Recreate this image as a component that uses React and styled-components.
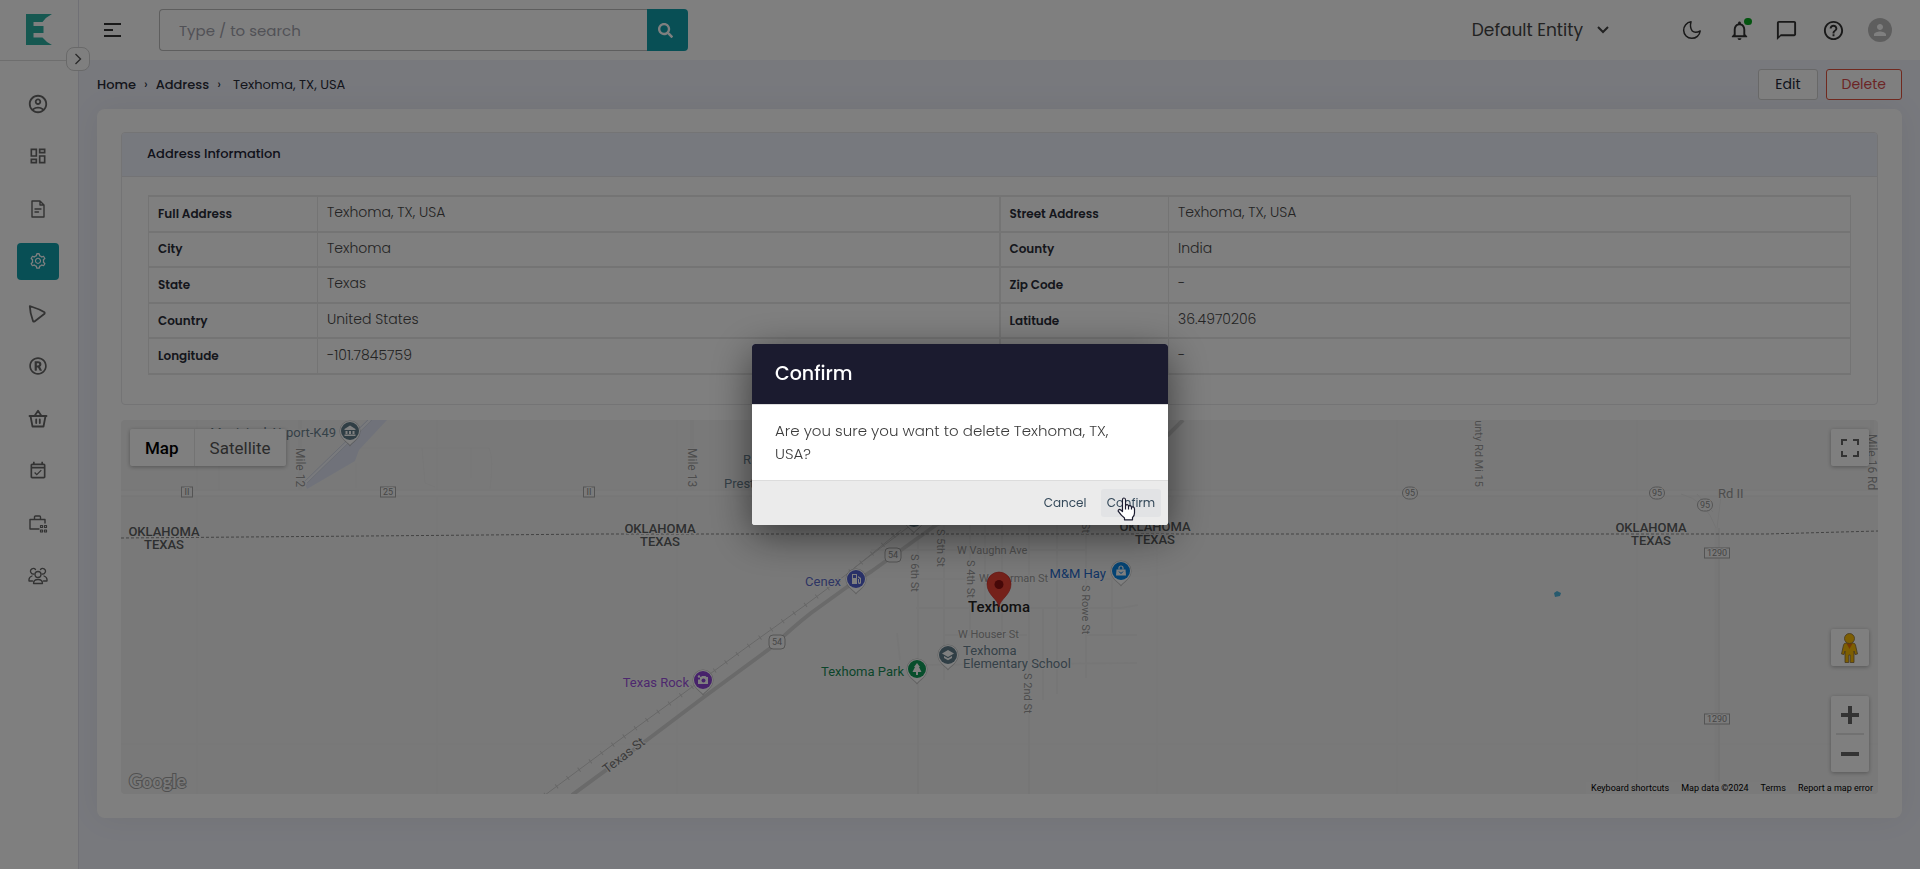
import React from "react";
import styled, { createGlobalStyle } from "styled-components";
import {
  MdOutlineAccountCircle,
  MdOutlineDashboard,
  MdOutlineEventAvailable,
  MdOutlineNotifications,
  MdOutlineChatBubbleOutline,
  MdHelpOutline,
  MdPerson,
} from "react-icons/md";
import { AiOutlineSetting } from "react-icons/ai";
import { FaRegRegistered, FaSearch } from "react-icons/fa";

const GlobalStyle = createGlobalStyle`
  *, *::before, *::after { box-sizing: border-box; }
  body {
    margin: 0;
    background: #f0f2fb;
    color: #333;
    font-family: Poppins, Inter, "Liberation Sans", sans-serif;
    font-size: 14px;
  }
  button, input { font: inherit; }
`;

/* ---------- shell ---------- */

const Shell = styled.div`
  display: grid;
  grid-template-columns: 79px 1fr;
  min-height: 100vh;
`;

const Sidebar = styled.aside`
  position: relative;
  background: #fff;
  border-right: 1px solid #e0e0ea;
`;

const Brand = styled.a`
  display: flex;
  align-items: center;
  justify-content: center;
  height: 61px;
  border-bottom: 1px solid #dcdcdc;
`;

const Expand = styled.button`
  position: absolute;
  top: 47px;
  right: -12px;
  z-index: 1;
  display: flex;
  align-items: center;
  justify-content: center;
  width: 24px;
  height: 24px;
  padding: 0;
  background: #fff;
  border: 1px solid #d2d2d2;
  border-radius: 8px;
`;

const Menu = styled.nav`
  display: flex;
  flex-direction: column;
  align-items: center;
  justify-content: space-between;
  height: 510px;
  margin-top: 24px;
  padding-right: 2px;
`;

const MenuItem = styled.a`
  display: flex;
  align-items: center;
  justify-content: center;
  width: 42px;
  height: 37px;
  border-radius: 4px;
  color: ${(p) => (p.$active ? "#fff" : "#666")};
  background: ${(p) => (p.$active ? "#109fab" : "transparent")};
`;

const Content = styled.div`
  display: flex;
  flex-direction: column;
  min-width: 0;
`;

/* ---------- top bar ---------- */

const TopBar = styled.header`
  display: flex;
  align-items: center;
  height: 60px;
  padding: 0 28px 0 22px;
  background: #fff;
`;

const BareButton = styled.button`
  position: relative;
  display: flex;
  align-items: center;
  justify-content: center;
  width: 24px;
  height: 24px;
  padding: 0;
  border: 0;
  background: none;
  color: #333;
`;

const Search = styled.form`
  display: flex;
  width: 529px;
  height: 42px;
  margin-left: 34px;
`;

const SearchInput = styled.input`
  flex: 1;
  min-width: 0;
  padding: 0 19px;
  border: 1px solid #bcbcbc;
  border-right: 0;
  border-radius: 4px 0 0 4px;
  font-size: 15px;
  outline: 0;
  &::placeholder { color: #a3a3ad; opacity: 1; }
`;

const SearchButton = styled.button`
  display: flex;
  align-items: center;
  justify-content: center;
  width: 41px;
  padding: 0 4px 0 0;
  border: 0;
  border-radius: 0 4px 4px 0;
  background: #109fab;
  color: #fff;
`;

const Entity = styled.button`
  display: flex;
  align-items: center;
  gap: 14px;
  margin-left: auto;
  padding: 0;
  border: 0;
  background: none;
  color: #444;
  font-size: 17px;
`;

const Tools = styled.div`
  display: flex;
  align-items: center;
  gap: 23px;
  margin-left: 71px;
`;

const Dot = styled.span`
  position: absolute;
  top: 0;
  right: -1px;
  width: 8px;
  height: 7px;
  border-radius: 4px;
  background: #06a81e;
`;

const Avatar = styled.button`
  display: flex;
  align-items: center;
  justify-content: center;
  width: 24px;
  height: 24px;
  padding: 0;
  border: 0;
  border-radius: 50%;
  background: #bdbdbd;
  color: #fff;
`;

/* ---------- page ---------- */

const Page = styled.main`
  padding: 0 18px 40px;
`;

const PageHead = styled.div`
  display: flex;
  align-items: center;
  justify-content: space-between;
  height: 49px;
`;

const Crumbs = styled.nav`
  display: flex;
  align-items: center;
  gap: 8px;
  font-size: 13px;
  color: #2a2d38;
`;

const CrumbLink = styled.a`
  color: inherit;
  font-weight: 500;
  text-decoration: none;
`;

const CrumbHere = styled.span`
  margin-left: 4px;
`;

const Actions = styled.div`
  display: flex;
  gap: 8px;
`;

const ActionButton = styled.button`
  height: 31px;
  padding: 0 ${(p) => (p.$danger ? 15 : 16)}px;
  border: 1px solid ${(p) => (p.$danger ? "#e0523f" : "#d0d0d0")};
  border-radius: 3px;
  background: #fff;
  color: ${(p) => (p.$danger ? "#d84a4a" : "#222838")};
  font-size: 14px;
`;

const Card = styled.div`
  display: flex;
  flex-direction: column;
  gap: 15px;
  padding: 23px 24px 24px;
  border-radius: 8px;
  background: #fff;
  box-shadow: 0 0 32px rgba(0, 0, 0, 0.06);
`;

const Panel = styled.section`
  border: 1px solid #e8e8ea;
  border-radius: 4px;
  overflow: hidden;
`;

const PanelTitle = styled.h2`
  display: flex;
  align-items: center;
  height: 44px;
  margin: 0;
  padding: 0 25px 2px;
  border-bottom: 1px solid #e6e6ea;
  background: #eff2fc;
  color: #222436;
  font-size: 13px;
  font-weight: 500;
`;

const PanelBody = styled.div`
  padding: 18px 26px 29px;
`;

const InfoTable = styled.table`
  width: 100%;
  height: 180px;
  table-layout: fixed;
  border-collapse: collapse;
  border: 1px solid #e6e6e6;
`;

const LabelCell = styled.th`
  width: 169px;
  padding: 0 9px;
  border: solid #e8e8e8;
  border-width: 2px 1px;
  border-left-width: ${(p) => (p.$inner ? 2 : 1)}px;
  color: #2a2d38;
  font-size: 12px;
  font-weight: 600;
  text-align: left;
`;

const ValueCell = styled.td`
  padding: 0 9px 2px;
  border: solid #e8e8e8;
  border-width: 2px 1px;
  color: #484848;
  font-size: 14px;
  font-weight: 300;
`;

const rows = [
  ["Full Address", "Texhoma, TX, USA", "Street Address", "Texhoma, TX, USA"],
  ["City", "Texhoma", "County", "India"],
  ["State", "Texas", "Zip Code", "-"],
  ["Country", "United States", "Latitude", "36.4970206"],
  ["Longitude", "-101.7845759", "Timezone", "-"],
];

/* ---------- map ---------- */

const MapFrame = styled.section`
  position: relative;
  height: 374px;
  overflow: hidden;
  border-radius: 4px;
  background: #f3f3f3;
  font-family: Roboto, sans-serif;
`;

const MapCanvas = styled.svg`
  display: block;
  width: 100%;
  height: 100%;
  text { paint-order: stroke; stroke: #f5f5f5; stroke-width: 2px; stroke-linejoin: round; }
`;

const MapTypes = styled.div`
  position: absolute;
  top: 9px;
  left: 9px;
  display: flex;
  border-radius: 2px;
  background: #fff;
  box-shadow: 0 1px 4px rgba(0, 0, 0, 0.3);
`;

const MapType = styled.button`
  height: 37px;
  padding: 0 15px;
  border: 0;
  border-left: ${(p) => (p.$active ? 0 : "1px solid #e6e6e6")};
  background: none;
  color: ${(p) => (p.$active ? "#000" : "#565656")};
  font-size: 17px;
  font-weight: ${(p) => (p.$active ? 500 : 400)};
`;

const MapTools = styled.div`
  position: absolute;
  top: 9px;
  right: 9px;
  bottom: 22px;
  display: flex;
  flex-direction: column;
  gap: 30px;
`;

const MapToolGroup = styled.div`
  display: flex;
  flex-direction: column;
  align-items: center;
  width: 38px;
  margin-bottom: ${(p) => (p.$push ? "auto" : 0)};
  border-radius: 2px;
  background: #fff;
  box-shadow: 0 1px 4px rgba(0, 0, 0, 0.3);
`;

const MapTool = styled.button`
  display: flex;
  align-items: center;
  justify-content: center;
  width: 38px;
  height: 37px;
  padding: 0;
  border: 0;
  background: none;
`;

const ToolRule = styled.span`
  width: 28px;
  height: 2px;
  background: #e2e2e2;
`;

const Credits = styled.div`
  position: absolute;
  right: 0;
  bottom: 0;
  display: flex;
  gap: 12px;
  padding: 0 5px;
  background: rgba(245, 245, 245, 0.7);
  color: #000;
  font-size: 9px;
  line-height: 12px;
  a { color: inherit; text-decoration: none; }
`;

const GoogleMark = styled.a`
  position: absolute;
  left: 8px;
  bottom: 1px;
  color: #f2f2f2;
  font-family: Lato, sans-serif;
  font-size: 18px;
  font-weight: 700;
  line-height: 24px;
  text-decoration: none;
  -webkit-text-stroke: 2px #a0a0a0;
  paint-order: stroke fill;
`;

const Road = ({ d, w = 1, c = "#eaeaea" }) => (
  <path d={d} fill="none" stroke={c} strokeWidth={w} strokeLinejoin="round" />
);

const Street = ({ x, y, turn = 0, size = 11, anchor = "start", children }) => (
  <text x={x} y={y} fontSize={size} fill="#9a9a9a" textAnchor={anchor} transform={turn ? `rotate(${turn} ${x} ${y})` : undefined}>
    {children}
  </text>
);

const Place = ({ x, y, fill, anchor = "start", children }) => (
  <text x={x} y={y} fontSize="13" fill={fill} textAnchor={anchor}>{children}</text>
);

const Border = ({ x, y }) => (
  <g fontSize="13" fontWeight="500" fill="#5c5f61" textAnchor="middle">
    <text x={x} y={y}>OKLAHOMA</text>
    <text x={x} y={y + 13}>TEXAS</text>
  </g>
);

const Shield = ({ x, y, w, r = 0, h = 10, children }) => (
  <g>
    <rect x={x - w / 2} y={y - h / 2} width={w} height={h} rx={r} fill="#f6f6f6" stroke="#a8a8a8" />
    <text x={x} y={y + 3} fontSize="9" fill="#8c8c8c" textAnchor="middle">{children}</text>
  </g>
);

const Pin = ({ x, y, fill, children }) => (
  <g transform={`translate(${x} ${y})`}>
    <path d="M0 15.500C-2.500 11.500-10.500 8-10.500 0A10.500 10.500 0 0 1 10.500 0C10.500 8 2.500 11.500 0 15.500Z" fill="#9c9c9c" opacity=".6" />
    <path d="M0 14C-2.500 10.500-10 7.500-10 0A10 10 0 0 1 10 0C10 7.500 2.500 10.500 0 14Z" fill="#fff" />
    <circle r="9" fill={fill} />
    <g fill="#fff" stroke="none">{children}</g>
  </g>
);

const bank = <path d="M-5.500-2 0-5.500 5.500-2V-1H-5.500ZM-4.500 0H-2.500V3H-4.500ZM-1 0H1V3H-1ZM2.500 0H4.500V3H2.500ZM-5.500 3.500H5.500V5H-5.500Z" />;

const ticks = "M424 375 490 326 556 278 619 232 683 186 726 154 780 110";

function MapView() {
  return (
    <MapFrame aria-label="Map">
      <MapCanvas viewBox="0 0 1757 374" preserveAspectRatio="xMidYMid slice" role="img" aria-label="Map of Texhoma">
        <Road d="M76 0V374M316 0V374M556 0V374M1036 110V374M1276 0V374M1516 0V374M0 324H1757M98 46V70" c="#efefef" />
        <Road d="M179 0V70M571 0V70M1358 0V72M1751 0V72" w={4} c="#efefef" />
        <Road d="M237 28H368Q373 38 369 69M301 28 304 63 314 67M350 28V58M235 43V68" c="#eeeeee" />
        <path d="M246 0H266L238 30 234 41 186 69 183 62Z" fill="#e0e5f4" />
        <Road d="M249 0 184 63" w={3} c="#f2f4fa" />
        <Road d="M251 0 186 63M247 0 182 63" c="#d4d9e6" />
        <Road d="M0 73H1560 1757" w={6} c="#f6f6f6" />
        <Road d="M0 70H1757M0 76H1757" c="#ececec" />
        <Road d="M1560 74Q1585 80 1595 108M1576 74 1592 92M1600 76 1596 108" c="#e8e8e8" />
        <Road d="M1596 108V374" w={5} c="#eeeeee" />
        <Road d="M1598 108V374" c="#e2e2e2" />
        <Road d="M797 120V374M823 105V260M849 105V215M864 105V190M881 105V212M908 105V374M922 187V280M936 105V274M965 105V258M991 160V213M750 130H965M796 159H1000M795 188H1000L1017 185M824 215H906M965 215H1016M795 245 1016 243M776 213 779 240" w={2} c="#ededed" />
        <Road d={ticks} c="#cfcfcf" />
        <path d={ticks} fill="none" stroke="#cfcfcf" strokeWidth="5" strokeDasharray="1 13" />
        <Road d="M733 148 790 105" c="#cfcfcf" />
        <Road d="M451 375 526 320 583 277 651 227Q672 207 690 193L726 167 751 151 815 105 1047 15 1062 0" w={4} c="#d4d4d4" />
        <path d="M0 118 246 116 479 114H1646L1757 111" fill="none" stroke="#868686" strokeDasharray="3 2" />
        <path d="M1433 173 1436 171 1440 173 1439 176 1434 177Z" fill="#4fb4dc" />

        <Shield x={66} y={72} w={11}>II</Shield>
        <Shield x={267} y={72} w={15}>25</Shield>
        <Shield x={468} y={72} w={11}>II</Shield>
        <Shield x={1289} y={73} w={15} h={12} r={6}>95</Shield>
        <Shield x={1536} y={73} w={15} h={12} r={6}>95</Shield>
        <Shield x={1584} y={85} w={15} h={12} r={6}>95</Shield>
        <Shield x={1596} y={133} w={25}>1290</Shield>
        <Shield x={1596} y={299} w={25}>1290</Shield>
        <Shield x={656} y={222} w={16} h={14} r={4}>54</Shield>
        <Shield x={772} y={135} w={16} h={14} r={4}>54</Shield>

        <Street x={175} y={28} turn={90} size={12}>Mile 12</Street>
        <Street x={567} y={28} turn={90} size={12}>Mile 13</Street>
        <Street x={1354} y={67} turn={90} anchor="end">unty Rd Mi 15</Street>
        <Street x={1747} y={14} turn={90} size={12}>Mile 16 Rd</Street>
        <Street x={1597} y={78} size={13}>Rd II</Street>
        <Street x={836} y={134}>W Vaughn Ave</Street>
        <Street x={858} y={162}>W Sherman St</Street>
        <Street x={837} y={218}>W Houser St</Street>
        <Street x={790} y={134} turn={90}>S 6th St</Street>
        <Street x={816} y={109} turn={90}>S 5th St</Street>
        <Street x={846} y={140} turn={90}>S 4th St</Street>
        <Street x={961} y={165} turn={90}>S Rowe St</Street>
        <Street x={903} y={253} turn={90}>S 2nd St</Street>
        <Street x={961} y={113} turn={90} anchor="end">Main St</Street>
        <g fill="#777" fontSize="13">
          <text x="486" y="354" transform="rotate(-38 486 354)">Texas St</text>
        </g>

        <Border x={43} y={116} />
        <Border x={539} y={113} />
        <Border x={1034} y={111} />
        <Border x={1530} y={112} />

        <Place x={215} y={17} fill="#6b8290" anchor="end">Municipal Airport-K49</Place>
        <Place x={622} y={44} fill="#6b8290">R</Place>
        <Place x={603} y={68} fill="#6b8290">Prest</Place>
        <Place x={720} y={166} fill="#5c6bc8" anchor="end">Cenex</Place>
        <Place x={568} y={267} fill="#9a50dc" anchor="end">Texas Rock</Place>
        <Place x={783} y={256} fill="#178a55" anchor="end">Texhoma Park</Place>
        <Place x={842} y={235} fill="#6b8290">Texhoma</Place>
        <Place x={842} y={248} fill="#6b8290">Elementary School</Place>
        <Place x={985} y={158} fill="#2468c8" anchor="end">M&amp;M Hay</Place>

        <Pin x={229} y={11} fill="#607d8b">{bank}</Pin>
        <Pin x={793} y={98} fill="#607d8b">{bank}</Pin>
        <Pin x={735} y={159} fill="#5363d0">
          <path d="M-4-5H1V5H-4ZM2-3 5-1V3.500A1.500 1.500 0 0 1 2 3.500V0H3V3.500H4V0L2-1.500Z" />
          <path d="M-3-4H0V-1H-3Z" fill="#5363d0" />
        </Pin>
        <Pin x={582} y={260} fill="#8e44d6">
          <path d="M-1.500-4H2.500L3.500-3H5V4H-5V-.500H-3V-3H-1.500Z" />
          <circle cy="0.500" cx="0.500" r="2" fill="#8e44d6" />
          <circle cx="-4" cy="-3.500" r="1.200" />
        </Pin>
        <Pin x={796} y={249} fill="#0f9d58">
          <path d="M0-6 3-2H2L4.500 3H1V6H-1V3H-4.500L-2-2H-3Z" />
        </Pin>
        <Pin x={827} y={235} fill="#607d8b">
          <path d="M-6-1.500 0-5 6-1.500 0 2ZM-4 1 0 3.300 4 1V3L0 5.300-4 3Z" />
        </Pin>
        <Pin x={1000} y={151} fill="#0a88e8">
          <path d="M-4.500-1.500H4.500L5 4.500H-5Z" />
          <path d="M-2-1.500V-3A2 2 0 0 1 2-3V-1.500" fill="none" stroke="#fff" strokeWidth="1.200" />
          <path d="M-2 .500Q0 4 2 .500" fill="none" stroke="#0a88e8" />
        </Pin>

        <text x="878" y="192" fontSize="15" fontWeight="500" fill="#222" textAnchor="middle">Texhoma</text>
        <path d="M878 187C877 179 866 175 866 164A12 12 0 0 1 890 164C890 175 879 179 878 187Z" fill="#ea4335" stroke="#c5221f" strokeWidth=".6" />
        <circle cx="878" cy="164.500" r="4.500" fill="#8c1010" />
      </MapCanvas>

      <MapTypes>
        <MapType $active type="button">Map</MapType>
        <MapType type="button">Satellite</MapType>
      </MapTypes>

      <MapTools>
        <MapToolGroup $push>
          <MapTool type="button" aria-label="Toggle fullscreen">
            <svg width="18" height="18" fill="none" stroke="#666" strokeWidth="2"><path d="M1 6V1H6M12 1H17V6M17 12V17H12M6 17H1V12" /></svg>
          </MapTool>
        </MapToolGroup>
        <MapToolGroup>
          <MapTool type="button" aria-label="Street View">
            <svg width="18" height="30" stroke="#8a7040" strokeWidth=".8" fill="#fbbc04">
              <path d="M5 10H12Q14 10 14.500 12L16.500 21 14 21.500 13 18V29.500H9.200V22H7.800V29.500H4V18L3 21.500.500 21 2.500 12Q3 10 5 10Z" />
              <path d="M5.500 10.500H11.500L8.500 16Z" fill="#e8710a" stroke="none" />
              <circle cx="8.500" cy="5.500" r="5" />
            </svg>
          </MapTool>
        </MapToolGroup>
        <MapToolGroup>
          <MapTool type="button" aria-label="Zoom in">
            <svg width="18" height="18" stroke="#666" strokeWidth="4"><path d="M0 9H18M9 0V18" /></svg>
          </MapTool>
          <ToolRule />
          <MapTool type="button" aria-label="Zoom out">
            <svg width="18" height="18" stroke="#666" strokeWidth="4"><path d="M0 9H18" /></svg>
          </MapTool>
        </MapToolGroup>
      </MapTools>

      <GoogleMark href="#google">Google</GoogleMark>
      <Credits>
        <a href="#shortcuts">Keyboard shortcuts</a>
        <span>Map data ©2024</span>
        <a href="#terms">Terms</a>
        <a href="#report">Report a map error</a>
      </Credits>
    </MapFrame>
  );
}

/* ---------- dialog ---------- */

const Backdrop = styled.div`
  position: fixed;
  inset: 0;
  z-index: 10;
  display: flex;
  align-items: center;
  justify-content: center;
  background: rgba(0, 0, 0, 0.5);
`;

const Dialog = styled.div`
  position: relative;
  width: 416px;
  border-radius: 3px;
  background: #fff;
  box-shadow: 0 10px 40px rgba(0, 0, 0, 0.55);
`;

const DialogTitle = styled.h1`
  margin: 0;
  padding: 0 23px;
  border-radius: 3px 3px 0 0;
  background: #1b1b2f;
  color: #fff;
  font-size: 19px;
  font-weight: 500;
  line-height: 60px;
`;

const DialogText = styled.p`
  margin: 0;
  padding: 14px 23px 15px;
  border-top: 1px solid #ddd;
  color: #3c3c3c;
  font-size: 15px;
  font-weight: 300;
  line-height: 23px;
`;

const DialogFoot = styled.div`
  display: flex;
  align-items: center;
  justify-content: flex-end;
  gap: 6px;
  height: 45px;
  padding: 0 7px;
  border-top: 1px solid #dcdcdc;
  border-radius: 0 0 3px 3px;
  background: #ebebeb;
`;

const DialogButton = styled.button`
  width: 60px;
  height: 28px;
  padding: 0;
  border: 0;
  border-radius: 3px;
  background: ${(p) => (p.$hover ? "#e2e3e5" : "transparent")};
  color: #34495a;
  font-size: 12px;
`;

const Pointer = styled.svg`
  position: absolute;
  right: 32px;
  bottom: 4px;
`;

/* ---------- icons ---------- */

const Line = ({ size = 20, w = 1.5, children }) => (
  <svg width={size} height={size} viewBox="0 0 20 20" fill="none" stroke="currentColor" strokeWidth={w} strokeLinejoin="round" strokeLinecap="round">
    {children}
  </svg>
);

const DocIcon = () => (
  <Line w={1.4}><path d="M4 2H12L16 6V18H4ZM12 2V6H16M7 10H13M7 13H10.500" /></Line>
);
const SendIcon = () => (
  <Line w={1.8}><path d="M1.800 2.200 4.500 3Q11 5 16.500 8.200 17 9 16.500 9.800L6.500 17.500Q5.500 18 5 17 2 9 1.800 2.200Z" /></Line>
);
const BasketIcon = () => (
  <Line w={1.8}><path d="M1.500 7H18.500M2.500 7 4.500 17.500H15.500L17.500 7M6.500 7 10 1.800 13.500 7M8.200 10.500V14M11.800 10.500V14" /></Line>
);
const CaseIcon = () => (
  <Line w={1.4}>
    <path d="M11 15H2V5.500H17V9M6.500 5.500V3Q6.500 2 7.500 2H11.500Q12.500 2 12.500 3V5.500" />
    <path d="M12.500 11.500H14.500V13.500H12.500ZM16.500 11.500H18.500V13.500H16.500ZM12.500 16H14.500V18H12.500ZM16.500 16H18.500V18H16.500Z" strokeWidth="1.200" />
  </Line>
);
const TeamIcon = () => (
  <Line w={1.3}>
    <circle cx="10" cy="8.500" r="3" />
    <path d="M5.500 17.500Q5.500 13.500 10 13.500T14.500 17.500ZM6 8A2.800 2.800 0 1 1 7.500 3.500M14 8A2.800 2.800 0 1 0 12.500 3.500M4.500 15H1Q.500 11 4 10M15.500 15H19Q19.500 11 16 10" />
  </Line>
);
const MoonIcon = () => (
  <Line w={1.5}><path d="M9 1.800A8.300 8.300 0 1 0 18.200 11Q13 13.500 10.300 11 7.500 7.500 9 1.800Z" /></Line>
);

const menu = [
  ["Profile", <MdOutlineAccountCircle size={22} />],
  ["Dashboard", <MdOutlineDashboard size={20} />],
  ["Documents", <DocIcon />],
  ["Settings", <AiOutlineSetting size={18} />],
  ["Campaigns", <SendIcon />],
  ["Registrations", <FaRegRegistered size={18} />],
  ["Orders", <BasketIcon />],
  ["Calendar", <MdOutlineEventAvailable size={20} />],
  ["Jobs", <CaseIcon />],
  ["Teams", <TeamIcon />],
];

export default function App() {
  return (
    <>
      <GlobalStyle />
      <Shell>
        <Sidebar>
          <Brand href="#home" aria-label="Home">
            <svg width="26" height="32" viewBox="0 0 26 32" fill="#2cb0a2">
              <path d="M0 0H26Q20 3 16.500 8H7.500V12H17.500V19H7.500V23.500H16.500Q20 28 26 31H0Z" />
            </svg>
          </Brand>
          <Expand type="button" aria-label="Expand menu">
            <svg width="8" height="12" fill="none" stroke="#555" strokeWidth="1.400"><path d="M1.500 1 6.500 6 1.500 11" /></svg>
          </Expand>
          <Menu aria-label="Main">
            {menu.map(([name, icon]) => (
              <MenuItem key={name} href={`#${name.toLowerCase()}`} aria-label={name} $active={name === "Settings"}>
                {icon}
              </MenuItem>
            ))}
          </Menu>
        </Sidebar>

        <Content>
          <TopBar>
            <BareButton type="button" aria-label="Toggle menu">
              <svg width="18" height="14" stroke="currentColor" strokeWidth="2"><path d="M0 1H17M0 7H9M0 13H17" /></svg>
            </BareButton>
            <Search role="search">
              <SearchInput type="text" placeholder="Type / to search" aria-label="Search" />
              <SearchButton type="button" aria-label="Search"><FaSearch size={15} /></SearchButton>
            </Search>
            <Entity type="button">
              Default Entity
              <svg width="12" height="8" fill="none" stroke="currentColor" strokeWidth="2"><path d="M1 1 6 6 11 1" /></svg>
            </Entity>
            <Tools>
              <BareButton type="button" aria-label="Dark mode"><MoonIcon /></BareButton>
              <BareButton type="button" aria-label="Notifications"><MdOutlineNotifications size={23} /><Dot /></BareButton>
              <BareButton type="button" aria-label="Messages"><MdOutlineChatBubbleOutline size={23} /></BareButton>
              <BareButton type="button" aria-label="Help"><MdHelpOutline size={23} /></BareButton>
              <Avatar type="button" aria-label="Account"><MdPerson size={18} /></Avatar>
            </Tools>
          </TopBar>

          <Page>
            <PageHead>
              <Crumbs aria-label="Breadcrumb">
                <CrumbLink href="#home">Home</CrumbLink>
                <span>›</span>
                <CrumbLink href="#address">Address</CrumbLink>
                <span>›</span>
                <CrumbHere>Texhoma, TX, USA</CrumbHere>
              </Crumbs>
              <Actions>
                <ActionButton type="button">Edit</ActionButton>
                <ActionButton type="button" $danger>Delete</ActionButton>
              </Actions>
            </PageHead>

            <Card>
              <Panel>
                <PanelTitle>Address Information</PanelTitle>
                <PanelBody>
                  <InfoTable>
                    <tbody>
                      {rows.map(([a, av, b, bv]) => (
                        <tr key={a}>
                          <LabelCell scope="row">{a}</LabelCell>
                          <ValueCell>{av}</ValueCell>
                          <LabelCell scope="row" $inner>{b}</LabelCell>
                          <ValueCell>{bv}</ValueCell>
                        </tr>
                      ))}
                    </tbody>
                  </InfoTable>
                </PanelBody>
              </Panel>
              <MapView />
            </Card>
          </Page>
        </Content>
      </Shell>

      <Backdrop>
        <Dialog role="dialog" aria-modal="true" aria-labelledby="confirm-title">
          <DialogTitle id="confirm-title">Confirm</DialogTitle>
          <DialogText>Are you sure you want to delete Texhoma, TX, USA?</DialogText>
          <DialogFoot>
            <DialogButton type="button">Cancel</DialogButton>
            <DialogButton type="button" $hover>Confirm</DialogButton>
          </DialogFoot>
          <Pointer width="19" height="24" viewBox="0 0 19 24" fill="#fff" stroke="#1b1b2f" strokeWidth="1.200" strokeLinejoin="round" aria-hidden="true">
            <path d="M5.500 14.500V3Q5.500 1 7 1T8.500 3V9Q9 7.500 10.200 7.700T11.500 9.500Q12 8.300 13.200 8.600T14.500 10.500Q15 9.500 16.200 9.900T17.500 12V16Q17.500 19 15.500 20.500V22.800H7.500V21Q4 18.500 1.200 14.200 1 12.500 2.500 12.300 4 12.700 5.500 14.500Z" />
            <path d="M8.500 9V12.500M11.500 9.500V12.500M14.500 10.500V12.500" fill="none" />
          </Pointer>
        </Dialog>
      </Backdrop>
    </>
  );
}
